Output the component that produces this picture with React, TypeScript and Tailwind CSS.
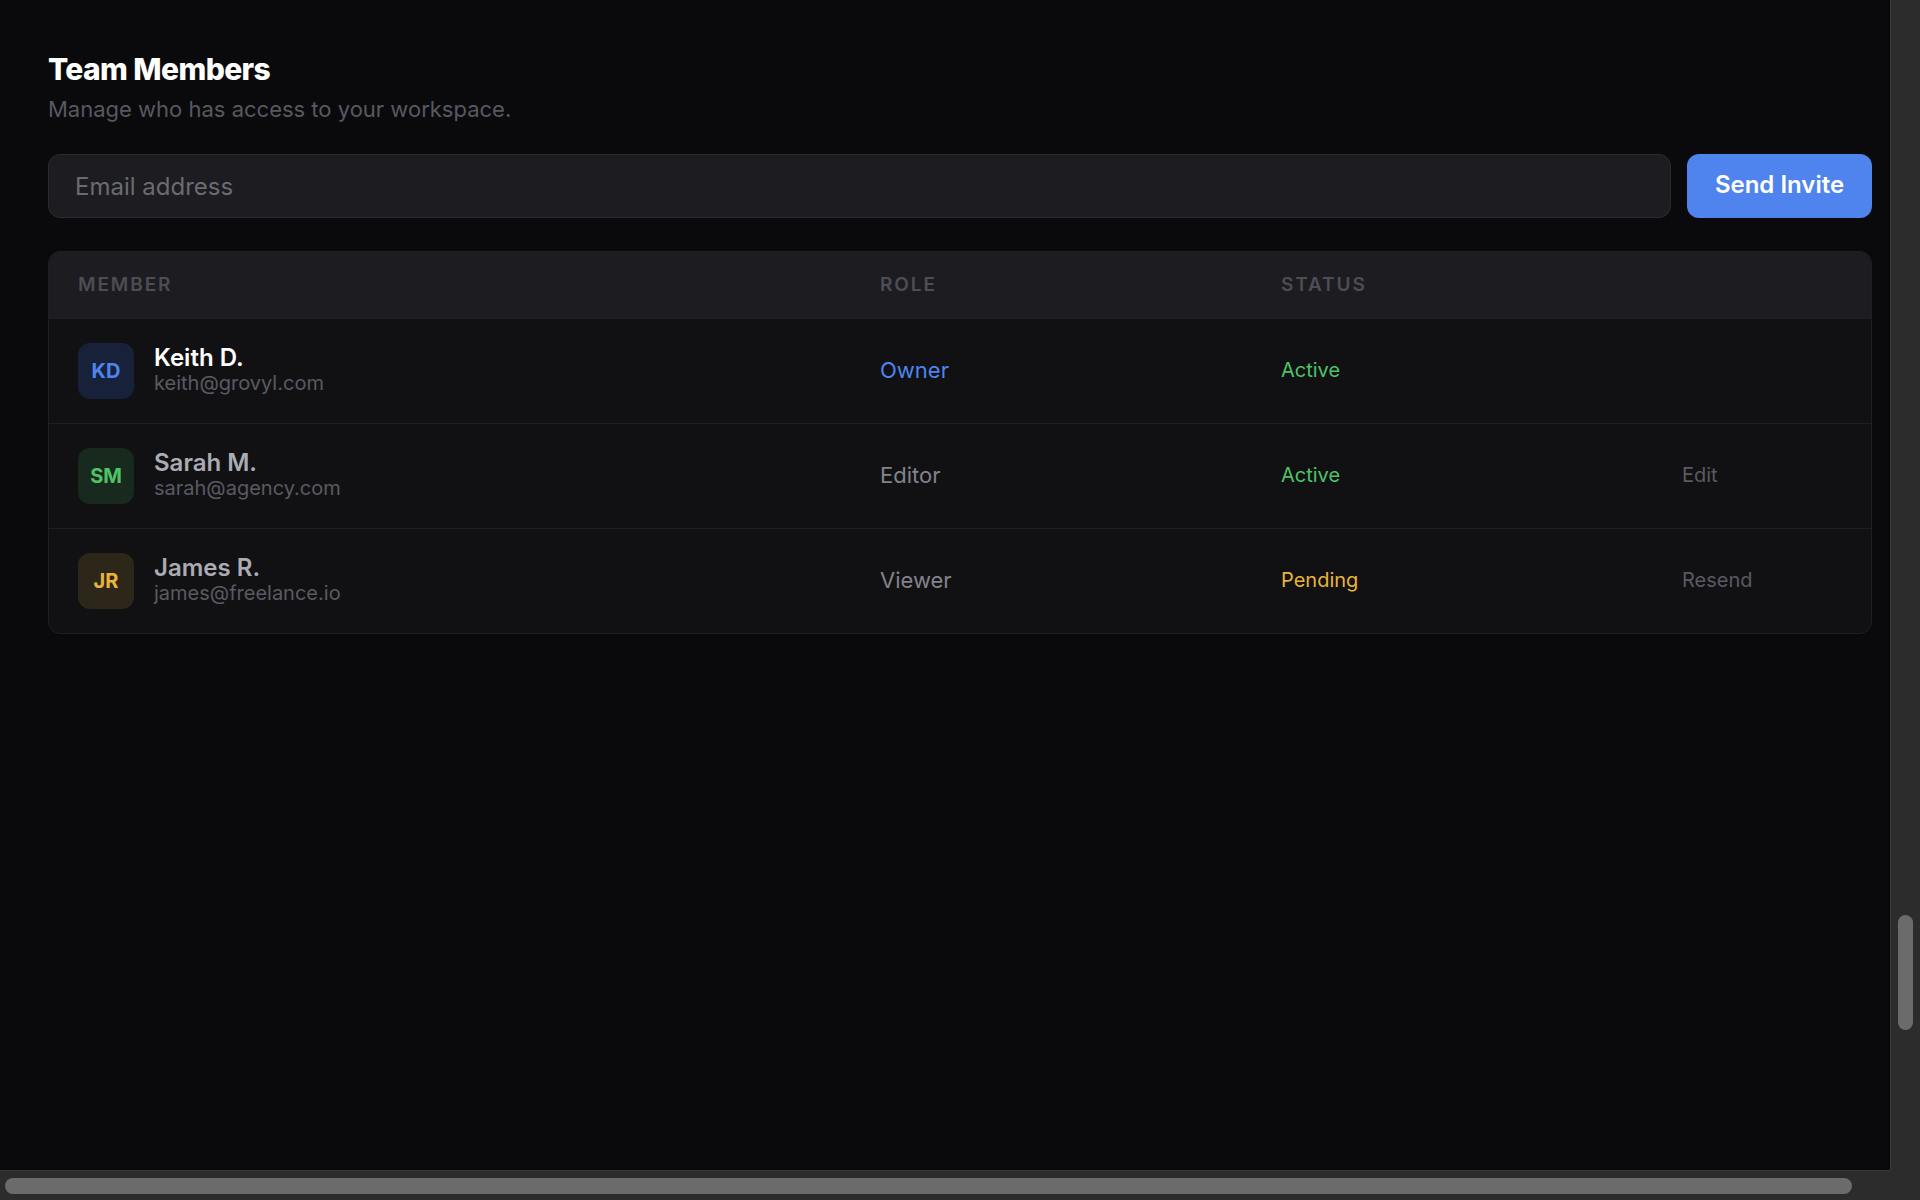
const members = [
  {
    initials: "KD",
    name: "Keith D.",
    email: "keith@grovyl.com",
    role: "Owner",
    status: "Active",
    action: "",
    avatar: "bg-[#17223a] text-[#4f84ee]",
    nameColor: "text-white",
    roleColor: "text-[#4f84ee]",
    statusColor: "text-[#4fc268]",
  },
  {
    initials: "SM",
    name: "Sarah M.",
    email: "sarah@agency.com",
    role: "Editor",
    status: "Active",
    action: "Edit",
    avatar: "bg-[#182a1e] text-[#4fc268]",
    nameColor: "text-[#ababb3]",
    roleColor: "text-[#83838b]",
    statusColor: "text-[#4fc268]",
  },
  {
    initials: "JR",
    name: "James R.",
    email: "james@freelance.io",
    role: "Viewer",
    status: "Pending",
    action: "Resend",
    avatar: "bg-[#2c2719] text-[#e8b53c]",
    nameColor: "text-[#ababb3]",
    roleColor: "text-[#83838b]",
    statusColor: "text-[#e8b53c]",
  },
]

const cols = "grid grid-cols-[802px_401px_401px_1fr] px-[29px]"

export default function App() {
  return (
    <div className="flex h-screen w-screen flex-col overflow-hidden bg-[#0a0a0d] font-['Inter',sans-serif]">
      <div className="flex min-h-0 flex-1">
        <main className="flex-1 pl-[48px] pr-[18px] pt-[51px]">
          <h1 className="text-[30px] font-extrabold leading-[36px] tracking-[-0.02em] text-white">
            Team Members
          </h1>
          <p className="mt-[7px] text-[22px] leading-[30px] text-[#585860]">
            Manage who has access to your workspace.
          </p>

          {/* Invite form */}
          <div className="mt-[30px] flex gap-4">
            <input
              type="text"
              placeholder="Email address"
              className="h-[64px] flex-1 rounded-[12px] border border-[#2a2a30] bg-[#1c1c21] px-[26px] text-[24px] text-white outline-none placeholder:text-[#6b6b73]"
            />
            <button className="h-[64px] w-[185px] rounded-[12px] bg-[#4f84ee] pb-[3px] text-[24px] font-semibold text-white">
              Send Invite
            </button>
          </div>

          {/* Members table */}
          <div className="mt-[33px] overflow-hidden rounded-[12px] border border-[#1e1e23] bg-[#111114]">
            <div className={`${cols} h-[66px] items-center bg-[#1c1c21] pt-[1px] text-[19px] font-semibold uppercase tracking-[0.1em] text-[#4d4d55]`}>
              <div>Member</div>
              <div>Role</div>
              <div>Status</div>
              <div />
            </div>
            {members.map((m) => (
              <div key={m.email} className={`${cols} h-[105px] items-center border-t border-[#1f1f24] pb-[2px]`}>
                <div className="flex items-center gap-[20px] pt-[2px]">
                  <div className={`flex h-[56px] w-[56px] items-center justify-center rounded-[12px] text-[20px] font-bold ${m.avatar}`}>
                    {m.initials}
                  </div>
                  <div className="-mt-[2px]">
                    <div className={`text-[24px] font-semibold leading-[27px] ${m.nameColor}`}>{m.name}</div>
                    <div className="text-[20px] leading-[25px] text-[#5a5a62]">{m.email}</div>
                  </div>
                </div>
                <div className={`text-[22px] ${m.roleColor}`}>{m.role}</div>
                <div className={`text-[20px] ${m.statusColor}`}>{m.status}</div>
                <div className="text-[20px] text-[#5a5a62]">{m.action}</div>
              </div>
            ))}
          </div>
        </main>

        {/* vertical scrollbar */}
        <div className="flex w-[30px] flex-col border-l border-[#3a3a3a] bg-[#2c2c2c] px-[7px]">
          <div className="h-[915px]" />
          <div className="h-[115px] rounded-full bg-[#6b6b6b]" />
        </div>
      </div>

      {/* horizontal scrollbar */}
      <div className="flex h-[30px]">
        <div className="flex flex-1 items-center border-t border-[#3a3a3a] bg-[#2c2c2c] pl-[5px] pr-[38px]">
          <div className="h-[16px] flex-1 rounded-full bg-[#6b6b6b]" />
        </div>
        <div className="w-[30px] bg-[#2c2c2c]" />
      </div>
    </div>
  )
}
